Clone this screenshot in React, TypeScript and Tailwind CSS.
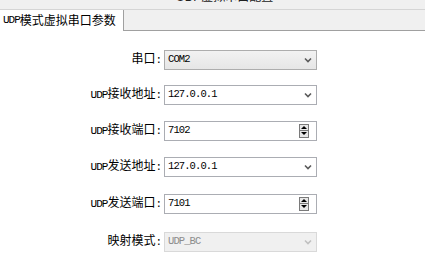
import React from "react";

const FONT = { fontFamily: '"Liberation Sans", "Noto Sans CJK SC", sans-serif' };
const MONO = { fontFamily: '"Liberation Mono", "Noto Sans CJK SC", monospace' };

function Udp() {
  return (
    <span className="text-[11px] tracking-[-1px]" style={MONO}>
      UDP
    </span>
  );
}

function Chevron({ color = "#5a5a5a" }: { color?: string }) {
  return (
    <svg width="8" height="6" viewBox="0 0 8 6" className="shrink-0">
      <path d="M1 1.5 L4 4.5 L7 1.5" fill="none" stroke={color} strokeWidth="1.6" />
    </svg>
  );
}

function Label({ udp, text }: { udp?: boolean; text: string }) {
  return (
    <div className="w-[164px] whitespace-nowrap pr-[2px] text-right text-[12px] leading-[20px] text-black" style={FONT}>
      {udp ? <Udp /> : null}
      {text}
      <span style={MONO} className="text-[11px]">:</span>
    </div>
  );
}

function Value({ value }: { value: string }) {
  return (
    <span className="text-[10.5px] leading-none tracking-[-0.9px]" style={MONO}>
      {value}
    </span>
  );
}

function Combo({ value, variant }: { value: string; variant: "list" | "edit" | "disabled" }) {
  const box =
    variant === "list"
      ? "border-[#adadad] bg-gradient-to-b from-[#f2f2f2] to-[#e6e6e6] text-black"
      : variant === "edit"
      ? "border-[#abadb3] bg-white text-black"
      : "border-[#d9d9d9] bg-[#f0f0f0] text-[#8c8c8c]";
  return (
    <div className={`flex h-[20px] w-[153px] items-center justify-between border pl-[3px] pr-[4px] ${box}`}>
      <Value value={value} />
      <Chevron color={variant === "disabled" ? "#c0c0c0" : "#5a5a5a"} />
    </div>
  );
}

function Spin({ value }: { value: string }) {
  return (
    <div className="flex h-[20px] w-[153px] items-center justify-between border border-[#abadb3] bg-white pl-[3px] pr-[7px] text-black">
      <Value value={value} />
      <div className="flex flex-col">
        <div className="flex h-[7px] w-[10px] items-center justify-center border border-[#7a7a7a] bg-[#e8e8e8]">
          <svg width="6" height="3" viewBox="0 0 6 3">
            <path d="M0 3 L3 0 L6 3 Z" fill="#000" />
          </svg>
        </div>
        <div className="flex h-[7px] w-[10px] items-center justify-center border border-t-0 border-[#7a7a7a] bg-[#e8e8e8]">
          <svg width="6" height="3" viewBox="0 0 6 3">
            <path d="M0 0 L6 0 L3 3 Z" fill="#000" />
          </svg>
        </div>
      </div>
    </div>
  );
}

export default function App() {
  return (
    <div className="flex h-[271px] w-[425px] flex-col overflow-hidden bg-white" style={FONT}>
      <div className="h-[9px] overflow-hidden bg-[#f0f0f0]">
        <div className="mt-[-9px] whitespace-nowrap pl-[176px] text-[12px] leading-[12px] text-[#202020]">UDP虚拟串口配置</div>
      </div>
      <div className="flex h-[22px] border-t border-[#d5d5d5] bg-[#f0f0f0]">
        <div className="flex w-[124px] items-center whitespace-nowrap border-r border-[#a0a0a0] bg-white pl-[3px] text-[12px] text-black">
          <Udp />
          模式虚拟串口参数
        </div>
        <div className="flex-1 border-b border-[#a0a0a0]" />
      </div>
      <div className="flex flex-col">
        <div className="mt-[18px] flex items-center">
          <Label text="串口" />
          <Combo value="COM2" variant="list" />
        </div>
        <div className="mt-[14px] flex items-center">
          <Label udp text="接收地址" />
          <Combo value="127.0.0.1" variant="edit" />
        </div>
        <div className="mt-[15px] flex items-center">
          <Label udp text="接收端口" />
          <Spin value="7102" />
        </div>
        <div className="mt-[15px] flex items-center">
          <Label udp text="发送地址" />
          <Combo value="127.0.0.1" variant="edit" />
        </div>
        <div className="mt-[16px] flex items-center">
          <Label udp text="发送端口" />
          <Spin value="7101" />
        </div>
        <div className="mt-[17px] flex items-center">
          <Label text="映射模式" />
          <Combo value="UDP_BC" variant="disabled" />
        </div>
      </div>
    </div>
  );
}
